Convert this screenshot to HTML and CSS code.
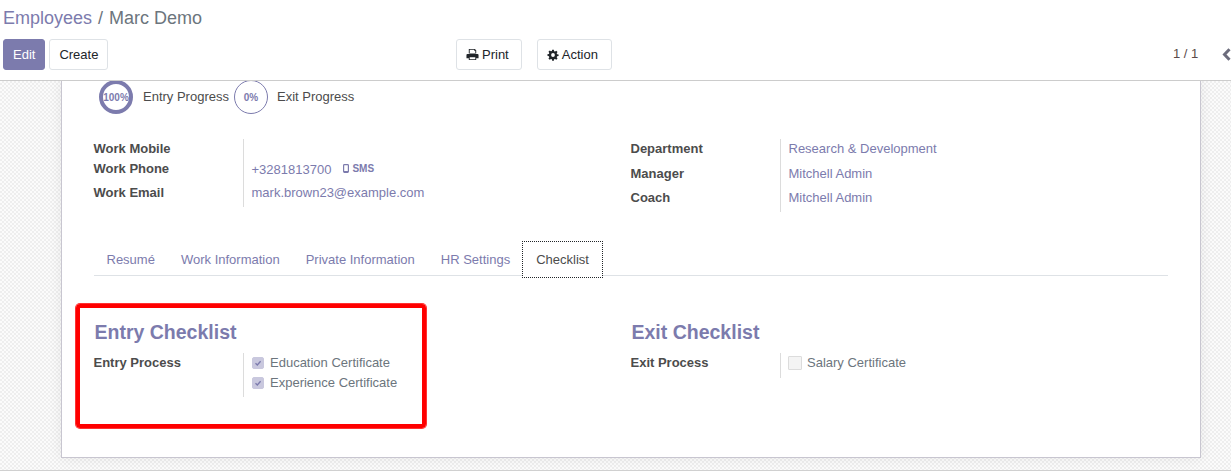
FILE: index.html
```html
<!DOCTYPE html>
<html lang="en">
<head>
<meta charset="utf-8">
<title>Marc Demo</title>
<link rel="stylesheet" href="styles.css">
</head>
<body>
<header class="panel">
  <div class="crumbs"><a class="link">Employees</a><span class="sep">/</span><span class="current">Marc Demo</span></div>
  <div class="actions">
    <div class="main-btns">
      <button class="btn primary">Edit</button>
      <button class="btn">Create</button>
    </div>
    <div class="side-btns">
      <button class="btn print">
        <svg class="ico" viewBox="0 0 14 14"><path d="M3 1h6.500L11 2.500V6H3z M4 2v3.500h6V3H8.800V2z M1.500 6.500h11a1 1 0 0 1 1 1V11h-2.500v2H3v-2H.5V7.500a1 1 0 0 1 1-1z M4 10v2h6v-2z" fill-rule="evenodd" fill="#212529"/></svg>Print</button>
      <button class="btn action">
        <svg class="ico" viewBox="0 0 14 14"><path d="M6 .8h2l.3 1.700 1.100.5 1.400-1 1.500 1.500-1 1.400.5 1.100 1.700.3v2l-1.700.3-.5 1.100 1 1.400-1.500 1.500-1.400-1-1.100.5-.3 1.700H6l-.3-1.700-1.100-.5-1.400 1-1.500-1.500 1-1.400-.5-1.100L.5 8V6l1.700-.3.5-1.100-1-1.400 1.500-1.500 1.400 1 1.100-.5z M7 4.800a2.200 2.200 0 1 0 0 4.400 2.200 2.200 0 0 0 0-4.400z" fill-rule="evenodd" fill="#212529"/></svg>Action</button>
    </div>
    <div class="pager">
      <span class="count">1 / 1</span>
      <svg class="chev" viewBox="0 0 9 13"><path d="M7.500 1.200 2.500 6.500l5 5.300" fill="none" stroke="#6c6c7c" stroke-width="3"/></svg>
    </div>
  </div>
</header>
<main class="canvas">
  <section class="sheet">
    <div class="progress-row">
      <div class="circle full">100%</div><span class="p-label first">Entry Progress</span>
      <div class="circle">0%</div><span class="p-label">Exit Progress</span>
    </div>
    <div class="columns info">
      <div class="group">
        <div class="labels">
          <div class="l h20">Work Mobile</div>
          <div class="l h24">Work Phone</div>
          <div class="l h24">Work Email</div>
        </div>
        <div class="values">
          <div class="h20"></div>
          <div class="h24"><a class="link">+3281813700</a><span class="sms"><svg class="phone" viewBox="0 0 6 9"><rect x=".6" y=".6" width="4.800" height="7.800" rx=".8" fill="none" stroke="#7c7bad" stroke-width="1.200"/><rect x="1" y="7" width="4" height="1.500" fill="#7c7bad"/></svg>SMS</span></div>
          <div class="h24"><a class="link">mark.brown23@example.com</a></div>
        </div>
      </div>
      <div class="group right">
        <div class="labels">
          <div class="l h25">Department</div>
          <div class="l h24">Manager</div>
          <div class="l h24">Coach</div>
        </div>
        <div class="values">
          <div class="h25"><a class="link">Research &amp; Development</a></div>
          <div class="h24"><a class="link">Mitchell Admin</a></div>
          <div class="h24"><a class="link">Mitchell Admin</a></div>
        </div>
      </div>
    </div>
    <nav class="tabs">
      <a class="tab">Resumé</a>
      <a class="tab">Work Information</a>
      <a class="tab">Private Information</a>
      <a class="tab">HR Settings</a>
      <a class="tab active">Checklist</a>
    </nav>
    <div class="columns checklist">
      <div class="check-col">
        <h2 class="title">Entry Checklist</h2>
        <div class="group">
          <div class="labels"><div class="l h20">Entry Process</div></div>
          <div class="values tall">
            <label class="item"><span class="box on"><svg viewBox="0 0 10 10"><path d="M2.500 5.200 4.300 7l3.300-3.800" fill="none" stroke="#7c7bad" stroke-width="1.300"/></svg></span>Education Certificate</label>
            <label class="item"><span class="box on"><svg viewBox="0 0 10 10"><path d="M2.500 5.200 4.300 7l3.300-3.800" fill="none" stroke="#7c7bad" stroke-width="1.300"/></svg></span>Experience Certificate</label>
          </div>
        </div>
      </div>
      <div class="check-col right">
        <h2 class="title">Exit Checklist</h2>
        <div class="group">
          <div class="labels"><div class="l h20">Exit Process</div></div>
          <div class="values short">
            <label class="item"><span class="box"></span>Salary Certificate</label>
          </div>
        </div>
      </div>
    </div>
    <div class="highlight"></div>
  </section>
</main>
</body>
</html>
```

FILE: styles.css
```css
* { box-sizing: border-box; }
html, body { margin: 0; height: 471px; overflow: hidden; }
body {
  font-family: "Liberation Sans", Arial, sans-serif;
  font-size: 13px;
  line-height: 1.5;
  color: #4c4c4c;
  background: #fff;
}
.link { color: #7c7bad; text-decoration: none; }

.panel {
  height: 81px;
  padding: 0 0 0 3px;
  border-bottom: 1px solid #ccc;
  background: #fff;
  position: relative;
  z-index: 2;
}
.crumbs {
  height: 39px;
  padding-top: 5px;
  font-size: 18px;
  line-height: 27px;
  color: #6c757d;
}
.sep { margin: 0 6px 0 6px; }
.actions {
  display: grid;
  grid-template-columns: 453px 1fr auto;
  height: 31px;
}
.main-btns, .side-btns { display: flex; gap: 4px; }
.side-btns { gap: 15px; }
.btn {
  height: 31px;
  padding: 0 9px;
  border: 1px solid #dee2e6;
  border-radius: 3px;
  background: #fff;
  color: #212529;
  font: 13px/1.5 "Liberation Sans", Arial, sans-serif;
  display: inline-flex;
  align-items: center;
}
.btn.primary { background: #7c7bad; border-color: #7c7bad; color: #fff; }
.btn.print { padding-right: 12px; }
.btn.action { padding-right: 13px; }
.ico { width: 13px; height: 13px; margin-right: 3px; }
.action .ico { width: 12px; height: 12px; }
.pager { display: flex; align-items: center; height: 31px; width: 58px; padding-bottom: 1px; }
.count { color: #5b4a4a; width: 50px; }
.chev { width: 9px; height: 13px; flex: none; }

.canvas {
  height: 390px;
  padding-left: 61px;
  background: repeating-conic-gradient(#eeeeee 0 25%, #fbfbfb 0 50%) 0 0 / 4px 4px;
  border-bottom: 1px solid #d0d0d0;
  overflow: hidden;
}
.sheet {
  position: relative;
  width: 1140px;
  height: 378px;
  background: #fff;
  border: 1px solid #c8c6d0;
  border-top: 0;
  box-shadow: 0 0 12px rgba(0, 0, 0, .07);
}
.progress-row {
  display: flex;
  align-items: center;
  height: 34px;
  margin-top: -1px;
  padding-left: 37px;
}
.circle {
  width: 34px;
  height: 34px;
  flex: none;
  border: 1px solid #7c7bad;
  border-radius: 50%;
  display: flex;
  align-items: center;
  justify-content: center;
  font-size: 10px;
  font-weight: 700;
  color: #7c7bad;
}
.circle.full { border-width: 4px; }
.p-label { margin-left: 9px; }
.p-label.first { margin-left: 10px; margin-right: 5px; }

.columns { display: grid; grid-template-columns: 537px 1fr; padding-left: 31.5px; }
.info { padding-top: 25px; }
.group { display: flex; }
.labels { width: 149.5px; flex: none; }
.l { font-weight: 700; color: #4c4c4c; }
.h20 { height: 20px; line-height: 20px; }
.h24 { height: 24px; line-height: 24px; }
.h25 { height: 25px; line-height: 20px; }
.values { border-left: 1px solid #dcdcdc; padding-left: 7.5px; }
.info .group:first-child .values { height: 68px; }
.info .group.right .values { height: 73px; }
.info .h24 { line-height: 19px; }
.sms {
  display: inline-flex;
  align-items: center;
  margin-left: 12px;
  font-size: 10px;
  font-weight: 700;
  color: #7c7bad;
  vertical-align: 1px;
}
.phone { width: 6px; height: 9px; margin-right: 3px; }

.tabs {
  display: flex;
  margin: 30px 32px 0 31.5px;
  height: 34px;
  border-bottom: 1px solid #dee2e6;
  align-items: stretch;
}
.tab {
  padding: 0 13px;
  line-height: 36px;
  height: 35px;
  color: #7c7bad;
}
.tab.active {
  color: #4c4c4c;
  height: 35px;
  padding: 0 13px;
  outline: 1px dotted #212529;
  background: #fff;
}

.checklist { padding-top: 43px; }
.check-col { min-width: 0; }
.title {
  margin: 0 0 7px 1px;
  font-size: 19.5px;
  line-height: 27px;
  font-weight: 700;
  color: #7c7bad;
}
.values.tall { height: 44px; padding-left: 7px; }
.values.short { height: 25px; padding-left: 7px; }
.item { display: flex; align-items: center; height: 20px; color: #6c757d; }
.box {
  width: 14px;
  height: 14px;
  margin: 0 5px 0 0;
  border: 1px solid #dcdcdc;
  background: #f4f4f4;
  border-radius: 1px;
  flex: none;
}
.box.on { width: 12px; height: 12px; margin: 0 6px 0 1px; background: #c9c8de; border-color: #c9c8de; border-radius: 2px; display: flex; }
.box svg { width: 100%; height: 100%; }

.highlight {
  position: absolute;
  left: 14px;
  top: 224px;
  width: 350px;
  height: 124px;
  border: 4px solid #f00;
  border-radius: 4px;
  box-shadow: 0 0 0 1px rgba(255, 0, 0, .8);
  pointer-events: none;
}
```
